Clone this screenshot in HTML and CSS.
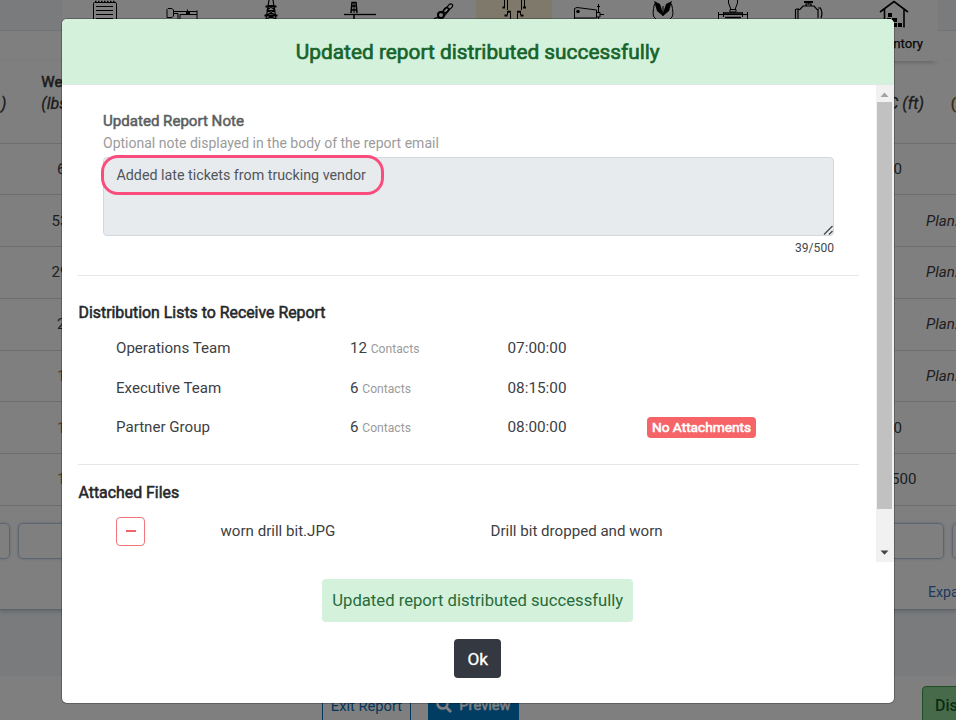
FILE: index.html
```html
<!DOCTYPE html>
<html lang="en">
<head>
<meta charset="utf-8">
<title>Distribute Report</title>
<link rel="stylesheet" href="styles.css">
</head>
<body>
<div class="page">
  <nav class="nav">
    <div class="nav-item"><svg width="26" height="30" viewBox="0 0 26 30"><g fill="none" stroke="#000"><path d="M1.500 30V3.500Q1.500 2.500 2.500 2.500H23Q24.500 2.500 24.500 3.500V30"/><path d="M4 6.500H21M4 10.500H21M4 14.500H21M4 18.500H21"/><path d="M3 1.800H23" stroke-width="2" stroke-dasharray="1.500 1.500"/></g></svg></div>
    <div class="nav-item"><svg width="32" height="30" viewBox="0 0 32 30"><g fill="none" stroke="#000"><path d="M1 9.500L2 8.500H6L7.500 10V16L6 17.500H1ZM7 13.500H12V19M14 19V14.500M7 11.500H31M31 10.500V19M14 14.500H31"/><path d="M20 12.800H24" stroke-width="2.500"/><path d="M21.500 9.500V15"/></g></svg></div>
    <div class="nav-item"><svg width="18" height="30" viewBox="0 0 18 30"><g fill="none" stroke="#000" stroke-width="1.200"><path d="M7 0L4 19M11 0L14 19M6 5L13 10L5 15L14 19M12 5L5 10L13 15L4 19M6 5.500H12M5 10.500H13"/><path d="M3.500 6.500H14.500M2.500 15.500H15.500" stroke-width="2"/></g></svg></div>
    <div class="nav-item"><svg width="32" height="30" viewBox="0 0 32 30"><g fill="none" stroke="#000"><path d="M0 14.500H32" stroke-width="1.300"/><path d="M7 13L8 2.500H12L13 13M7 10H13M8 6H12M10 15V20" stroke-width="1.500"/><path d="M10 2V13"/></g></svg></div>
    <div class="nav-item chain"><svg width="22" height="30" viewBox="0 0 22 30"><g fill="none" stroke="#000" stroke-width="1.200"><path d="M2 19Q4 17 7 18M9 13L15 7M12 16L18 9"/><circle cx="9" cy="15" r="3" stroke-width="2"/><ellipse cx="14" cy="10" rx="3" ry="2" transform="rotate(-45 14 10)"/><ellipse cx="18" cy="6.500" rx="3" ry="2" transform="rotate(-45 18 6.500)"/></g></svg></div>
    <div class="nav-item active"><svg width="26" height="30" viewBox="0 0 26 30"><g fill="none" stroke="#000"><path d="M3.500 0V7M6.500 0V10M20.500 0V10M23.500 0V7M9.500 13V19M16.500 13V19M6.500 11V15M19.500 11V15"/><path d="M1.500 7.500H4M22 7.500H25M3.500 15.500H6.500M19.500 15.500H22.500M6 11.800H10M16 11.800H20" stroke-width="2"/></g></svg></div>
    <div class="nav-item"><svg width="32" height="30" viewBox="0 0 32 30"><g fill="none" stroke="#000"><path d="M1.500 19V8.500L4 7.500L23.500 10V18H1M24 12.500H27V17H24M27 14.500H31M25.500 4V12M24 6.500H27M25.500 17V19"/></g><circle cx="5" cy="11.500" r="1.800"/></svg></div>
    <div class="nav-item"><svg width="24" height="30" viewBox="0 0 24 30"><path d="M3 1L9 4L12 13L15 4L21 1L18 11L12 16L6 11Z"/><path d="M3.500 4Q1 14 3 17L6 20M20.500 4Q23 14 21 17L18 20M12 6V16" fill="none" stroke="#000"/></svg></div>
    <div class="nav-item"><svg width="32" height="30" viewBox="0 0 32 30"><g fill="none" stroke="#000"><path d="M11.500 0V3L14 9.500H18L20.500 3V0M13 9.500H19V12H13ZM1.500 12V19M30.500 12V19M1 14.500H31M6.500 12V17M25.500 12V17"/><path d="M7 13H25M8 17.500H24" stroke-width="1.500"/></g></svg></div>
    <div class="nav-item"><svg width="30" height="30" viewBox="0 0 30 30"><g fill="none" stroke="#000" stroke-width="1.200"><path d="M1.500 9V19M4 19V9.500H6L9 6H20L23 9.500H24V18M26.500 8Q29 13 27 18M24 8H27M12 6V4H17V6M14.500 1V4M2 9H5"/><path d="M10 2H19" stroke-width="2"/></g></svg></div>
    <div class="nav-item inventory"><svg width="30" height="30" viewBox="0 0 30 30"><path d="M1 12L15 1.500L29 12M5.500 9V27.500M25 9V27.500" fill="none" stroke="#000" stroke-width="1.600"/><path d="M9 13H13V17H9ZM13 18H18V22H13ZM9 23H13V27H9ZM14 23H18V27H14ZM19 23H23V27H19ZM8 18H12V22H8Z"/></svg><span>Inventory</span></div>
  </nav>
  <main class="panel">
    <div class="row head"><div class="cut">)</div><div class="unit"><b>We</b><i>(lbs)</i></div><div class="right"><i>C (ft)</i></div><div class="more">(</div></div>
    <div class="row"><div class="v1">6</div><div class="right">0</div></div>
    <div class="row"><div class="v2">53</div><div class="plan">Plan.</div></div>
    <div class="row"><div class="v2">29</div><div class="plan">Plan.</div></div>
    <div class="row"><div class="v1">2</div><div class="plan">Plan.</div></div>
    <div class="row"><div class="v1 warn">1</div><div class="plan">Plan.</div></div>
    <div class="row"><div class="v1 warn">1</div><div class="right">0</div></div>
    <div class="row"><div class="v1 warn">1</div><div class="right wide">500</div></div>
    <div class="inputs"><span class="box"></span><span class="box"></span><span class="box"></span></div>
    <div class="expand">Expa</div>
  </main>
  <footer class="bar">
    <button class="exit">Exit Report</button>
    <button class="preview"><svg width="16" height="16" viewBox="0 0 16 16"><circle cx="6.500" cy="6.500" r="5" fill="none" stroke="#fff" stroke-width="2.600"/><path d="M10 10L15 15" stroke="#fff" stroke-width="3"/></svg>Preview</button>
    <button class="dist">Dis</button>
  </footer>
</div>
<div class="backdrop">
  <section class="modal">
    <header class="title">Updated report distributed successfully</header>
    <div class="scroll">
      <div class="content">
        <div class="note">
          <div class="label">Updated Report Note</div>
          <div class="hint">Optional note displayed in the body of the report email</div>
          <div class="area">Added late tickets from trucking vendor<span class="ring"></span>
            <svg class="grip" width="10" height="10" viewBox="0 0 10 10"><path d="M1 9.500L9.500 1M6 9.500L9.500 6" stroke="#444" stroke-width="1.200"/></svg></div>
          <div class="count">39/500</div>
        </div>
        <div class="lists">
          <h2>Distribution Lists to Receive Report</h2>
          <div class="list"><span>Operations Team</span><span>12 <small>Contacts</small></span><span class="time">07:00:00</span></div>
          <div class="list"><span>Executive Team</span><span>6 <small>Contacts</small></span><span class="time">08:15:00</span></div>
          <div class="list"><span>Partner Group</span><span>6 <small>Contacts</small></span><span class="time">08:00:00</span><em>No Attachments</em></div>
        </div>
        <div class="files">
          <h2>Attached Files</h2>
          <div class="file"><button class="minus"><i></i></button><span>worn drill bit.JPG</span><span>Drill bit dropped and worn</span></div>
        </div>
      </div>
      <div class="track">
        <svg width="17" height="17" viewBox="0 0 17 17"><path d="M4.500 12L8.500 7.500L12.500 12Z" fill="#a3a3a3"/></svg>
        <div class="thumb"></div>
        <svg width="17" height="17" viewBox="0 0 17 17"><path d="M4.500 5.500H12.500L8.500 9.800Z" fill="#444"/></svg>
      </div>
    </div>
    <div class="foot">
      <div class="toast">Updated report distributed successfully</div>
      <button class="ok">Ok</button>
    </div>
  </section>
</div>
</body>
</html>
```
FILE: styles.css
```css
* { box-sizing: border-box; }
body { margin: 0; width: 956px; height: 720px; overflow: hidden; font-family: Roboto, sans-serif; font-size: 15.1px; color: #3d4043; }
button { font: inherit; padding: 0; }
svg { display: block; flex: none; }
b, .label, h2 { font-weight: 400; -webkit-text-stroke: .55px currentColor; }

.page { height: 720px; display: flex; flex-direction: column; background: #f3f7fb; overflow: hidden; }
.nav { height: 61px; flex: none; display: grid; grid-template-columns: 85px 70px 107px 71px 81px 76px 74px 74px 65px 88px 85px; padding-left: 62px; background: linear-gradient(#f3f7fb, #f3f7fb) left top / 100% 30px no-repeat, linear-gradient(#dfe6ee, #dfe6ee) 0 30px / 100% 1px no-repeat, #fff; }
.nav-item { display: flex; flex-direction: column; align-items: center; background: #fff; }
.chain { padding-left: 15px; }
.nav-item.active { background: #fff3d6; }
.inventory { font-size: 13.200px; color: #111; -webkit-text-stroke: .25px #111; box-shadow: 0 3px 6px -3px #aaa; clip-path: inset(0 0 -9px 0); padding-right: 3px; }
.inventory span { margin: 6px 0 0 4px; }

.panel { height: 549px; flex: none; background: #fff; border-bottom: 1px solid #b9c4ce; box-shadow: 0 2px 4px #c9d0d6; }
.row { height: 51.750px; display: flex; align-items: center; justify-content: space-between; border-bottom: 1px solid #d9dee2; }
.head { height: 82.500px; color: #38393b; align-items: flex-end; -webkit-text-stroke: .3px; line-height: 22px; padding-bottom: 28px; justify-content: flex-start; }
.head .cut { width: 41.500px; font-style: italic; font-size: 16px; padding-left: 1px; }
.unit { width: 849.500px; }
.unit i { display: block; font-size: 16px; }
.head .right { width: 63px; font-size: 16.300px; }
.head .more { color: #6b4a10; }
.v1 { padding-left: 57px; }
.v2 { padding-left: 51.500px; }
.right { width: 62.500px; }
.wide { width: 65px; }
.warn { color: #b08040; }
.plan { width: 30px; font-style: italic; white-space: nowrap; }
.inputs { display: flex; padding-top: 17.500px; height: 54px; }
.box { border: 1px solid #b9cbe0; border-radius: 5px; box-shadow: 0 0 3px #b9cbe0; width: 926px; height: 36px; margin-right: 8px; flex: none; }
.box:first-child { width: 20px; margin-left: -10px; }
.expand { margin: 24px 0 0 928px; font-size: 14.200px; color: #3b74b8; }
.bar { margin-top: 66px; height: 44px; padding: 10px 0 0 322px; display: flex; gap: 17px; align-items: flex-start; background: #fff; flex: none; }
.bar button { height: 40px; border-radius: 4px; font-size: 14.700px; flex: none; line-height: 34px; }
.exit { width: 89px; color: #0b6fb5; background: #fff; border: 1px solid #0b6fb5; }
.bar .preview { height: 38px; width: 91px; color: #fff; background: #0378c7; border: 0; display: flex; align-items: center; justify-content: center; gap: 7px; -webkit-text-stroke: .5px #fff; }
.bar .dist { margin-left: 386px; width: 100px; background: #8fd694; color: #185c24; border: 1px solid #3e9b48; text-align: left; padding-left: 12px; font-size: 16px; font-weight: 500; }

.backdrop { position: absolute; inset: 0; background: rgba(0, 0, 0, .5); padding: 19px 0 0 62px; overflow: hidden; }
.modal { width: 831.500px; height: 684px; background: #fff; border-radius: 5px; overflow: hidden; box-shadow: 0 0 0 1px rgba(0, 0, 0, .25); }
.title { height: 66px; background: #d4f1db; border-bottom: 1px solid #dce9e5; text-align: center; font-size: 20.830px; line-height: 66px; color: #17642b; -webkit-text-stroke: .65px #17642b; }
.scroll { display: flex; height: 477px; }
.content { width: 814px; padding: 0 17px 0 16px; }
.note { height: 191px; padding: 25px 25px 0; border-bottom: 1px solid #e6e7e8; }
.label { font-size: 15.080px; line-height: 22px; color: #5c5f61; }
.hint { font-size: 14px; line-height: 22px; color: #9b9b9b; }
.area { position: relative; height: 79px; margin-top: 3px; border: 1px solid #d2d8dd; border-radius: 4px; background: #e7ebee; padding: 9px 12.500px; font-size: 14.270px; line-height: 17px; color: #51565a; }
.ring { position: absolute; left: -3px; top: -3px; width: 283px; height: 40px; border: 3px solid #fa4c7d; border-radius: 17px; }
.grip { position: absolute; right: 0; bottom: 0; }
.count { text-align: right; font-size: 12.100px; line-height: 24px; color: #44474a; }
h2 { margin: 0; font-size: 15.870px; line-height: 22px; color: #25282b; padding-left: .5px; }
.lists { height: 189px; padding-top: 26px; border-bottom: 1px solid #e6e7e8; }
.list { height: 39.500px; display: grid; grid-template-columns: 234px 157.500px 139.500px auto; align-items: center; justify-content: start; padding: 1px 0 0 38px; }
h2 + .list { margin-top: 4px; }
.time { font-size: 15.300px; }
small { font-size: 12.150px; color: #9b9b9b; }
em { font-style: normal; background: #f66468; color: #fff; font-size: 13.700px; height: 21px; line-height: 21px; width: 109px; text-align: center; border-radius: 4px; -webkit-text-stroke: .6px #fff; }
.files { padding-top: 17px; }
.file { display: grid; grid-template-columns: 104.500px 270px auto; justify-content: start; align-items: center; padding: 13px 0 0 38px; }
.file span { padding-bottom: 2px; }
.minus { width: 29px; height: 29px; border: 1px solid #f3757a; border-radius: 4px; background: #fff; display: grid; place-items: center; }
.minus i { width: 10px; height: 2px; background: #f3656a; margin-top: -2px; }
.track { width: 17.500px; background: #f1f1f1; display: flex; flex-direction: column; }
.thumb { height: 407px; margin: 0 2px 36px 1px; background: #c1c1c1; flex: none; }
.foot { display: flex; flex-direction: column; align-items: center; padding-top: 17px; }
.toast { width: 311px; height: 43px; line-height: 44px; text-align: center; font-size: 16.660px; color: #286b3a; background: #d4f1db; border-radius: 4px; }
.ok { margin-top: 17px; width: 47px; height: 39px; border: 0; border-radius: 4px; background: #343840; color: #fff; font-size: 17.200px; -webkit-text-stroke: .35px #fff; }
```
